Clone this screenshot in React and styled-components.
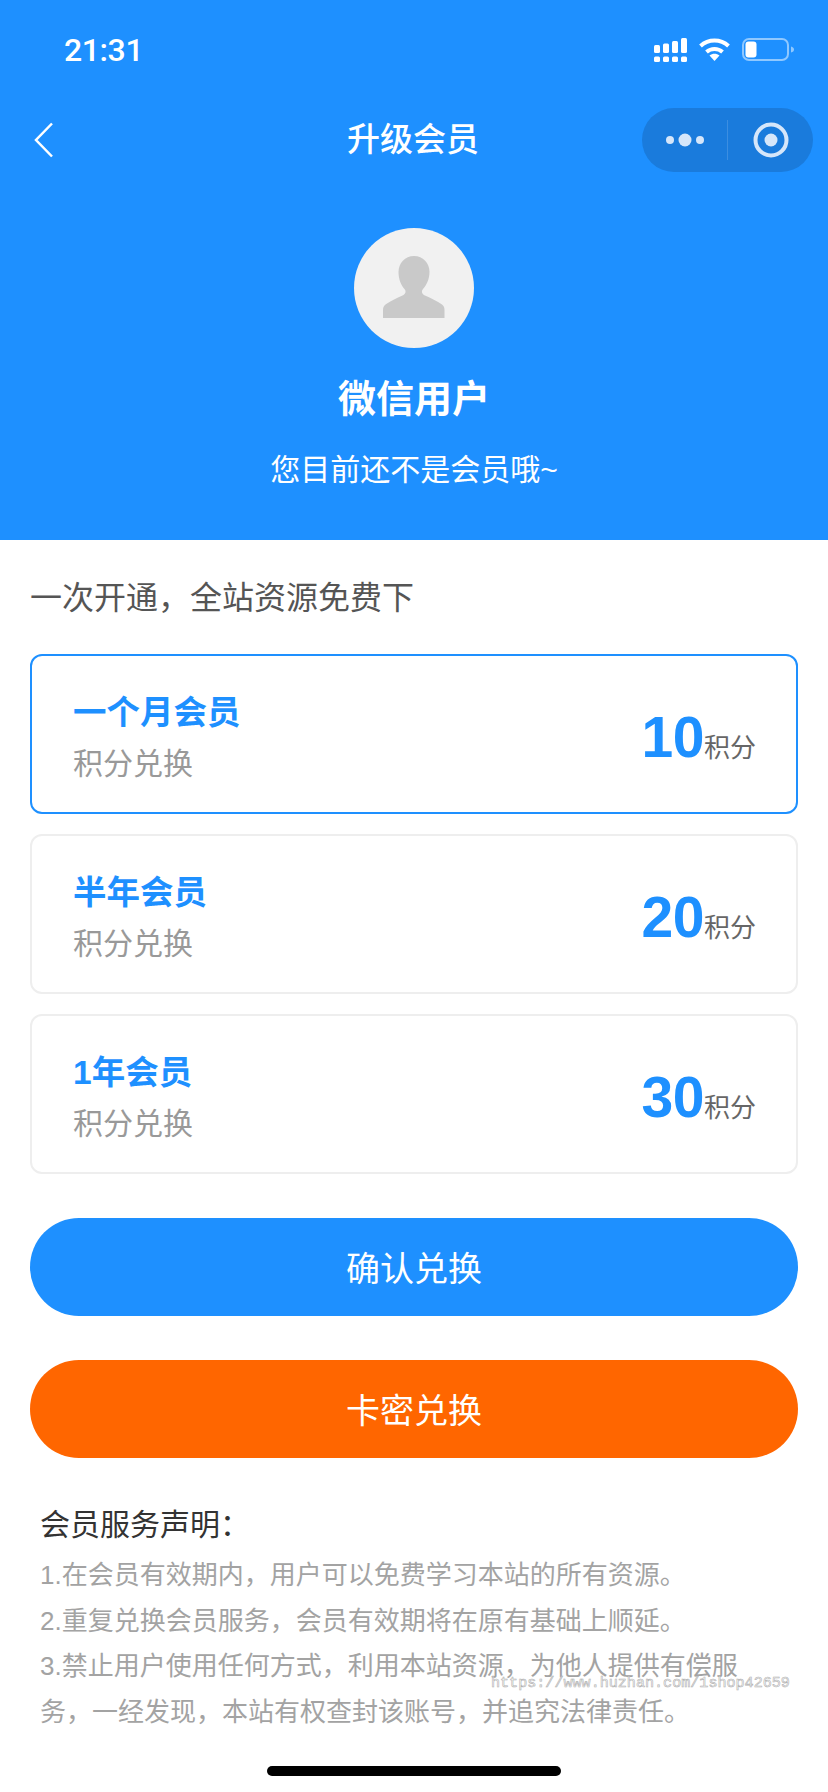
import React from 'react';
import styled, { createGlobalStyle } from 'styled-components';

const GlobalStyle = createGlobalStyle`
  html, body {
    margin: 0;
    padding: 0;
    background: #fff;
  }
  * {
    box-sizing: border-box;
  }
`;

const FONT = '"Liberation Sans", "Noto Sans CJK SC", sans-serif';

const Page = styled.div`
  position: relative;
  width: 828px;
  height: 1792px;
  overflow: hidden;
  background: #fff;
  font-family: ${FONT};
`;

const Header = styled.header`
  height: 540px;
  background: #1e90ff;
  color: #fff;
`;

const StatusBar = styled.div`
  height: 100px;
  padding: 30px 34px 0 64px;
  display: flex;
  justify-content: space-between;
  align-items: flex-start;
`;

const Time = styled.span`
  font-family: Roboto, sans-serif;
  font-weight: 500;
  font-size: 32px;
  letter-spacing: -0.4px;
  line-height: 40px;
`;

const StatusIcons = styled.div`
  display: flex;
  align-items: flex-start;
  gap: 12px;
  padding-top: 8px;

  svg {
    display: block;
  }
`;

const NavBar = styled.div`
  height: 80px;
  padding: 0 15px 0 34px;
  display: flex;
  align-items: center;
  justify-content: space-between;
  position: relative;
`;

const NavTitle = styled.div`
  position: absolute;
  left: 0;
  right: 0;
  text-align: center;
  padding-right: 2px;
  font-size: 33px;
  font-weight: 500;
  line-height: 40px;
`;

const Capsule = styled.div`
  width: 171px;
  height: 64px;
  border-radius: 32px;
  background: #1a7bdc;
  display: flex;
  align-items: center;
`;

const CapsulePart = styled.div`
  flex: 1;
  height: 100%;
  display: flex;
  align-items: center;
  justify-content: center;
`;

const CapsuleDivider = styled.div`
  width: 1px;
  height: 40px;
  background: rgba(255, 255, 255, 0.15);
`;

const Profile = styled.div`
  display: flex;
  flex-direction: column;
  align-items: center;
  padding-top: 48px;
`;

const Avatar = styled.div`
  width: 120px;
  height: 120px;
  border-radius: 50%;
  background: #f1f1f1;
  display: flex;
  align-items: center;
  justify-content: center;
`;

const UserName = styled.div`
  margin-top: 26px;
  font-size: 38px;
  font-weight: 700;
  line-height: 50px;
`;

const UserNote = styled.div`
  margin-top: 24px;
  font-size: 30px;
  line-height: 44px;
`;

const Main = styled.main`
  padding: 36px 30px 0;
`;

const Intro = styled.div`
  font-size: 32px;
  line-height: 44px;
  color: #555;
`;

const PlanList = styled.div`
  margin-top: 34px;
  display: flex;
  flex-direction: column;
  gap: 20px;
`;

const PlanCard = styled.div`
  height: 160px;
  padding: 6px 40px 0 41px;
  border: 2px solid ${(p) => (p.$active ? '#1e90ff' : '#eeeeee')};
  border-radius: 12px;
  display: flex;
  align-items: center;
  justify-content: space-between;
`;

const PlanName = styled.div`
  font-size: 33.500px;
  font-weight: 700;
  line-height: 44px;
  color: #1e90ff;
`;

const PlanNote = styled.div`
  margin-top: 9px;
  font-size: 30px;
  line-height: 40px;
  color: #999;
`;

const PlanPrice = styled.div`
  display: flex;
  align-items: baseline;
`;

const PriceValue = styled.span`
  font-size: 57px;
  font-weight: 700;
  letter-spacing: -0.5px;
  color: #1e90ff;
`;

const PriceUnit = styled.span`
  font-size: 26px;
  color: #666;
`;

const ActionButton = styled.button`
  display: block;
  width: 100%;
  height: 98px;
  margin-top: 44px;
  padding: 0 0 2px;
  border: none;
  border-radius: 49px;
  background: ${(p) => p.$color};
  color: #fff;
  font-family: ${FONT};
  font-size: 34px;
`;

const Notice = styled.section`
  margin-top: 45px;
  padding: 0 50px 0 10px;
`;

const NoticeTitle = styled.div`
  font-size: 30px;
  line-height: 44px;
  margin-bottom: 6px;
  color: #333;
`;

const NoticeLine = styled.div`
  font-size: 26px;
  line-height: 45.600px;
  color: #a3a3a3;
`;

const Watermark = styled.div`
  position: absolute;
  left: 491px;
  top: 1674px;
  font-family: "Liberation Mono", monospace;
  font-size: 15.100px;
  line-height: 18px;
  color: rgba(255, 255, 255, 0.6);
  -webkit-text-stroke: 0.6px #b0b0b0;
`;

const HomeBar = styled.div`
  position: absolute;
  left: 267px;
  top: 1766px;
  width: 294px;
  height: 10px;
  border-radius: 5px;
  background: #000;
`;

const SignalIcon = () => (
  <svg width="33" height="24" viewBox="0 0 33 24" fill="#fff">
    <rect x="0" y="7" width="6" height="8" rx="1.5" />
    <rect x="9" y="5.500" width="6" height="9.500" rx="1.5" />
    <rect x="18" y="3" width="6" height="12" rx="1.5" />
    <rect x="27" y="0" width="6" height="15" rx="1.5" />
    <rect x="0" y="18.500" width="6" height="5.500" rx="1.5" />
    <rect x="9" y="18.500" width="6" height="5.500" rx="1.5" />
    <rect x="18" y="18.500" width="6" height="5.500" rx="1.5" />
    <rect x="27" y="18.500" width="6" height="5.500" rx="1.5" />
  </svg>
);

const WifiIcon = () => (
  <svg width="31" height="23" viewBox="0 0 31 23" fill="none" stroke="#fff" strokeWidth="4">
    <path d="M1.500 8C9.500 .7 21.500 .7 29.500 8" />
    <path d="M7.500 14C12 10 19 10 23.500 14" />
    <path d="M15.500 23l-5-5.500c3-2.200 7-2.200 10 0z" fill="#fff" stroke="none" />
  </svg>
);

const BatteryIcon = () => (
  <svg width="52" height="23" viewBox="0 0 52 23">
    <rect x="1" y="1" width="45" height="21" rx="6" fill="none" stroke="#fff" strokeOpacity="0.5" strokeWidth="2" />
    <rect x="3.500" y="3.500" width="11" height="16" rx="3" fill="#fff" />
    <path d="M49 8.500c2 .5 3 1.500 3 3s-1 2.500-3 3z" fill="#fff" fillOpacity="0.5" />
  </svg>
);

const BackIcon = () => (
  <svg width="20" height="36" viewBox="0 0 20 36" fill="none" stroke="#fff" strokeWidth="2.500">
    <path d="M18 1.500L2 18l16 16.500" />
  </svg>
);

const MoreIcon = () => (
  <svg width="40" height="16" viewBox="0 0 40 16" fill="#d5e6fa">
    <circle cx="5" cy="8" r="4" />
    <circle cx="20" cy="8" r="6.500" />
    <circle cx="35" cy="8" r="4" />
  </svg>
);

const TargetIcon = () => (
  <svg width="36" height="36" viewBox="0 0 36 36">
    <circle cx="18" cy="18" r="15.500" fill="none" stroke="#d5e6fa" strokeWidth="4" />
    <circle cx="18" cy="18" r="6.500" fill="#d5e6fa" />
  </svg>
);

const UserIcon = () => (
  <svg width="64" height="64" viewBox="0 0 64 64" fill="#c9c9c9">
    <path d="M32 0c9 0 15.500 7 15.500 16 0 7-3 13-6.500 17-2 2.500-1 5 2 6.500 6 2.500 12 5.500 17 9 2 1.500 2.500 3 2.500 6V62H1v-7.500c0-3 .5-4.500 2.500-6 5-3.500 11-6.500 17-9 3-1.500 4-4 2-6.500C19 29 16.500 23 16.500 16 16.500 7 23 0 32 0z" />
  </svg>
);

const plans = [
  { name: '一个月会员', price: 10, active: true },
  { name: '半年会员', price: 20 },
  { name: '1年会员', price: 30 },
];

const notices = [
  '1.在会员有效期内，用户可以免费学习本站的所有资源。',
  '2.重复兑换会员服务，会员有效期将在原有基础上顺延。',
  '3.禁止用户使用任何方式，利用本站资源，为他人提供有偿服务，一经发现，本站有权查封该账号，并追究法律责任。',
];

const App = () => (
  <Page>
    <GlobalStyle />
    <Header>
      <StatusBar>
        <Time>21:31</Time>
        <StatusIcons>
          <SignalIcon />
          <WifiIcon />
          <BatteryIcon />
        </StatusIcons>
      </StatusBar>
      <NavBar>
        <BackIcon />
        <NavTitle>升级会员</NavTitle>
        <Capsule>
          <CapsulePart>
            <MoreIcon />
          </CapsulePart>
          <CapsuleDivider />
          <CapsulePart>
            <TargetIcon />
          </CapsulePart>
        </Capsule>
      </NavBar>
      <Profile>
        <Avatar>
          <UserIcon />
        </Avatar>
        <UserName>微信用户</UserName>
        <UserNote>您目前还不是会员哦~</UserNote>
      </Profile>
    </Header>
    <Main>
      <Intro>一次开通，全站资源免费下</Intro>
      <PlanList>
        {plans.map((plan) => (
          <PlanCard key={plan.name} $active={plan.active}>
            <div>
              <PlanName>{plan.name}</PlanName>
              <PlanNote>积分兑换</PlanNote>
            </div>
            <PlanPrice>
              <PriceValue>{plan.price}</PriceValue>
              <PriceUnit>积分</PriceUnit>
            </PlanPrice>
          </PlanCard>
        ))}
      </PlanList>
      <ActionButton $color="#1e90ff">确认兑换</ActionButton>
      <ActionButton $color="#ff6600">卡密兑换</ActionButton>
      <Notice>
        <NoticeTitle>会员服务声明：</NoticeTitle>
        {notices.map((line) => (
          <NoticeLine key={line}>{line}</NoticeLine>
        ))}
      </Notice>
    </Main>
    <Watermark>https://www.huzhan.com/1shop42659</Watermark>
    <HomeBar />
  </Page>
);

export default App;
